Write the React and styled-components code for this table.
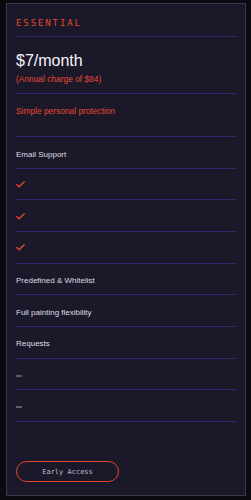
import * as React from "react";
import styled, { createGlobalStyle } from "styled-components";

const GlobalStyle = createGlobalStyle`
  html, body {
    margin: 0;
    padding: 0;
    background: #0b0a10;
  }
  body {
    font-family: "Liberation Sans", Arial, sans-serif;
  }
`;

const ACCENT = "#e4472e";
const RULE = "#2c2973";

const features = [
  { kind: "text", label: "Email Support" },
  { kind: "check" },
  { kind: "check" },
  { kind: "check" },
  { kind: "text", label: "Predefined & Whitelist" },
  { kind: "text", label: "Full painting flexibility" },
  { kind: "text", label: "Requests" },
  { kind: "none" },
  { kind: "none" },
];

const CheckIcon = () => (
  <svg width="9" height="7" viewBox="0 0 9 7" fill="none">
    <polyline
      points="0.8,3.6 3.2,5.8 8.2,0.8"
      stroke={ACCENT}
      strokeWidth="1.3"
      strokeLinecap="round"
      strokeLinejoin="round"
    />
  </svg>
);

export default function App() {
  return (
    <>
      <GlobalStyle />
      <Page>
        <Card>
          <TitleBlock>
            <Tier>ESSENTIAL</Tier>
          </TitleBlock>
          <PriceBlock>
            <Price>$7/month</Price>
            <Note>(Annual charge of $84)</Note>
          </PriceBlock>
          <DescBlock>
            <Note>Simple personal protection</Note>
          </DescBlock>
          {features.map((f, i) => (
            <FeatureRow key={i}>
              {f.kind === "text" && <FeatureText>{f.label}</FeatureText>}
              {f.kind === "check" && (
                <IconSlot>
                  <CheckIcon />
                </IconSlot>
              )}
              {f.kind === "none" && <Dash />}
            </FeatureRow>
          ))}
          <Footer>
            <AccessButton>Early Access</AccessButton>
          </Footer>
        </Card>
      </Page>
    </>
  );
}

const Page = styled.div`
  padding: 3px 5px 4px 6px;
`;

const Card = styled.div`
  box-sizing: border-box;
  width: 240px;
  height: 493px;
  display: flex;
  flex-direction: column;
  padding: 0 9px 13px 9px;
  background: #1b1929;
  border: 1px solid #3a394c;
`;

const Section = styled.div`
  box-sizing: border-box;
  border-bottom: 1px solid ${RULE};
  flex-shrink: 0;
`;

const TitleBlock = styled(Section)`
  height: 33px;
  padding-top: 13px;
`;

const Tier = styled.div`
  font-family: "DejaVu Sans Mono", "Liberation Mono", monospace;
  font-size: 9px;
  line-height: 12px;
  letter-spacing: 1.9px;
  color: ${ACCENT};
`;

const PriceBlock = styled(Section)`
  height: 57px;
  padding-top: 14px;
`;

const Price = styled.div`
  font-size: 16px;
  line-height: 19px;
  color: #f6f5fb;
  margin-bottom: 4px;
`;

const Note = styled.div`
  font-size: 8.4px;
  line-height: 10px;
  color: ${ACCENT};
`;

const DescBlock = styled(Section)`
  height: 43px;
  padding-top: 12px;
`;

const FeatureRow = styled(Section)`
  height: 31.67px;
  padding-top: 12.5px;
`;

const FeatureText = styled.div`
  font-size: 8px;
  line-height: 10px;
  color: #dddce6;
`;

const IconSlot = styled.div`
  display: flex;
  padding-top: 0;
`;

const Dash = styled.div`
  width: 6px;
  height: 2px;
  margin-top: 3.5px;
  background: #5c5a70;
`;

const Footer = styled.div`
  margin-top: auto;
  display: flex;
`;

const AccessButton = styled.button`
  box-sizing: border-box;
  width: 103px;
  height: 21px;
  padding: 0;
  border: 1.4px solid ${ACCENT};
  border-radius: 11px;
  background: transparent;
  color: #bcbbd2;
  font-family: "DejaVu Sans Mono", "Liberation Mono", monospace;
  font-size: 7px;
  cursor: pointer;
`;
